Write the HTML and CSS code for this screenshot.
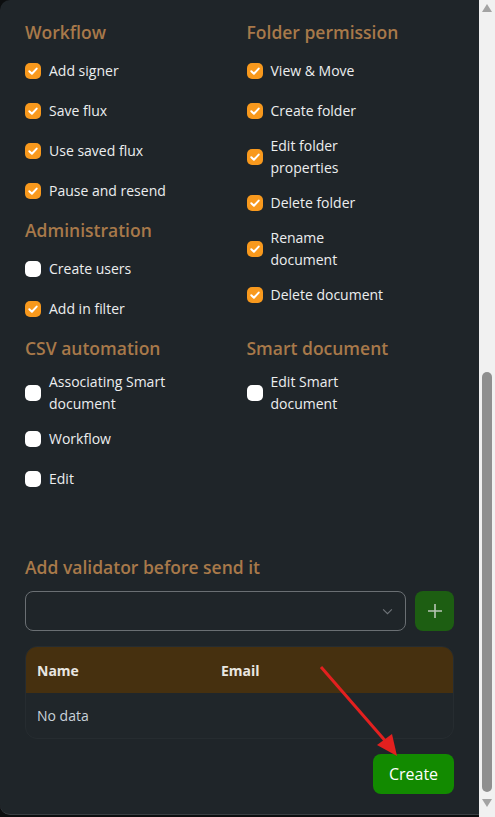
FILE: index.html
```html
<!DOCTYPE html>
<html lang="en">
<head>
<meta charset="utf-8">
<title>Permissions</title>
<link rel="stylesheet" href="styles.css">
</head>
<body>
<div class="window">
  <main class="panel">
    <div class="perm-grid">
      <div class="col">
        <section class="section">
          <h2 class="title">Workflow</h2>
          <label class="check"><span class="box on"><svg viewBox="0 0 16 16"><path d="M4.3 8.3 L6.9 10.8 L11.7 5.6"/></svg></span><span class="label">Add signer</span></label>
          <label class="check"><span class="box on"><svg viewBox="0 0 16 16"><path d="M4.3 8.3 L6.9 10.8 L11.7 5.6"/></svg></span><span class="label">Save flux</span></label>
          <label class="check"><span class="box on"><svg viewBox="0 0 16 16"><path d="M4.3 8.3 L6.9 10.8 L11.7 5.6"/></svg></span><span class="label">Use saved flux</span></label>
          <label class="check"><span class="box on"><svg viewBox="0 0 16 16"><path d="M4.3 8.3 L6.9 10.8 L11.7 5.6"/></svg></span><span class="label">Pause and resend</span></label>
        </section>
        <section class="section">
          <h2 class="title">Administration</h2>
          <label class="check"><span class="box"></span><span class="label">Create users</span></label>
          <label class="check"><span class="box on"><svg viewBox="0 0 16 16"><path d="M4.3 8.3 L6.9 10.8 L11.7 5.6"/></svg></span><span class="label">Add in filter</span></label>
        </section>
      </div>
      <div class="col">
        <section class="section">
          <h2 class="title">Folder permission</h2>
          <label class="check"><span class="box on"><svg viewBox="0 0 16 16"><path d="M4.3 8.3 L6.9 10.8 L11.7 5.6"/></svg></span><span class="label">View &amp; Move</span></label>
          <label class="check"><span class="box on"><svg viewBox="0 0 16 16"><path d="M4.3 8.3 L6.9 10.8 L11.7 5.6"/></svg></span><span class="label">Create folder</span></label>
          <label class="check"><span class="box on"><svg viewBox="0 0 16 16"><path d="M4.3 8.3 L6.9 10.8 L11.7 5.6"/></svg></span><span class="label">Edit folder properties</span></label>
          <label class="check"><span class="box on"><svg viewBox="0 0 16 16"><path d="M4.3 8.3 L6.9 10.8 L11.7 5.6"/></svg></span><span class="label">Delete folder</span></label>
          <label class="check"><span class="box on"><svg viewBox="0 0 16 16"><path d="M4.3 8.3 L6.9 10.8 L11.7 5.6"/></svg></span><span class="label">Rename document</span></label>
          <label class="check"><span class="box on"><svg viewBox="0 0 16 16"><path d="M4.3 8.3 L6.9 10.8 L11.7 5.6"/></svg></span><span class="label">Delete document</span></label>
        </section>
      </div>
      <div class="col">
        <section class="section">
          <h2 class="title">CSV automation</h2>
          <label class="check"><span class="box"></span><span class="label">Associating Smart document</span></label>
          <label class="check"><span class="box"></span><span class="label">Workflow</span></label>
          <label class="check"><span class="box"></span><span class="label">Edit</span></label>
        </section>
      </div>
      <div class="col">
        <section class="section">
          <h2 class="title">Smart document</h2>
          <label class="check"><span class="box"></span><span class="label">Edit Smart document</span></label>
        </section>
      </div>
    </div>

    <section class="validator">
      <h2 class="title">Add validator before send it</h2>
      <div class="select-row">
        <div class="select">
          <svg class="chev" viewBox="0 0 12 8"><path d="M1 1.5 L6 6.5 L11 1.5"/></svg>
        </div>
        <button class="add" type="button"><svg viewBox="0 0 16 16"><path d="M8 1 V15 M1 8 H15"/></svg></button>
      </div>
      <div class="table">
        <div class="thead">
          <div class="th">Name</div>
          <div class="th">Email</div>
        </div>
        <div class="tbody">No data</div>
      </div>
      <div class="actions">
        <button class="create" type="button">Create</button>
      </div>
    </section>

    <svg class="arrow" viewBox="0 0 479 815" width="479" height="815">
      <line x1="321" y1="667" x2="388" y2="744"/>
      <polygon points="397,756 377,745 392,734"/>
    </svg>
  </main>
  <div class="scrollbar">
    <span class="tri up"></span>
    <div class="track"><span class="thumb"></span></div>
    <span class="tri down"></span>
  </div>
</div>
</body>
</html>
```

FILE: styles.css
```css
* {
  box-sizing: border-box;
  margin: 0;
  padding: 0;
}

html, body {
  height: 817px;
  overflow: hidden;
}

body {
  background: #0c0e0f;
  font-family: "Open Sans", "Noto Sans", sans-serif;
}

.window {
  display: flex;
  height: 817px;
}

.panel {
  position: relative;
  width: 479px;
  height: 815px;
  flex: none;
  background: #1f2529;
  border-radius: 10px 0 0 10px;
  border-bottom: 1px solid #3a3f43;
  padding: 17px 25px 18px;
  display: flex;
  flex-direction: column;
}

.perm-grid {
  display: grid;
  grid-template-columns: 1fr 1fr;
  column-gap: 14px;
  row-gap: 8px;
}

.col,
.section {
  display: flex;
  flex-direction: column;
  gap: 8px;
}

.title {
  font-size: 17.5px;
  font-weight: 600;
  line-height: 30px;
  color: #a8794a;
}

.check {
  display: flex;
  align-items: center;
  gap: 8px;
  min-height: 32px;
}

.box {
  width: 16px;
  height: 16px;
  flex: none;
  border-radius: 5px;
  background: #ffffff;
  display: flex;
}

.box.on {
  background: #f8991d;
}

.box svg {
  width: 16px;
  height: 16px;
}

.box svg path {
  fill: none;
  stroke: #ffffff;
  stroke-width: 2;
  stroke-linecap: round;
  stroke-linejoin: round;
}

.label {
  font-size: 14px;
  line-height: 22px;
  color: #eceeef;
  max-width: 119px;
}

.validator {
  margin-top: 57px;
  display: flex;
  flex-direction: column;
}

.select-row {
  margin-top: 9px;
  display: flex;
  gap: 9px;
}

.select {
  flex: 1;
  height: 40px;
  border: 1px solid #6a6f73;
  border-radius: 8px;
  display: flex;
  align-items: center;
  justify-content: flex-end;
  padding-right: 12px;
}

.chev {
  width: 11px;
  height: 7px;
}

.chev path {
  fill: none;
  stroke: #70757a;
  stroke-width: 1.2;
}

.add {
  width: 39px;
  height: 40px;
  border: none;
  border-radius: 8px;
  background: #1d5e12;
  display: flex;
  align-items: center;
  justify-content: center;
}

.add svg {
  width: 16px;
  height: 16px;
}

.add svg path {
  stroke: #b9c6b6;
  stroke-width: 1.6;
}

.table {
  margin-top: 15px;
  border: 1px solid #262c30;
  border-radius: 12px;
  overflow: hidden;
  background: #20262a;
}

.thead {
  display: grid;
  grid-template-columns: 184px 1fr;
  height: 46px;
  align-items: center;
  background: #46300f;
}

.th {
  padding-left: 11px;
  font-size: 14px;
  font-weight: 700;
  color: #e9e6e1;
}

.tbody {
  height: 45px;
  display: flex;
  align-items: center;
  padding-left: 11px;
  font-size: 14px;
  color: #c9d2da;
}

.actions {
  margin-top: 15px;
  display: flex;
  justify-content: flex-end;
}

.create {
  width: 81px;
  height: 40px;
  border: none;
  border-radius: 8px;
  background: #128a00;
  color: #ffffff;
  font-family: "Open Sans", "Noto Sans", sans-serif;
  font-size: 16px;
}

.arrow {
  position: absolute;
  left: 0;
  top: 0;
  pointer-events: none;
}

.arrow line {
  stroke: #e3201f;
  stroke-width: 3;
}

.arrow polygon {
  fill: #e3201f;
}

.scrollbar {
  width: 16px;
  height: 817px;
  background: #f1f1f1;
  display: flex;
  flex-direction: column;
  align-items: center;
  padding: 4px 0 10px;
}

.tri {
  width: 0;
  height: 0;
  border-left: 5px solid transparent;
  border-right: 5px solid transparent;
  flex: none;
}

.tri.up {
  border-bottom: 8px solid #a3a3a3;
}

.tri.down {
  border-top: 8px solid #a3a3a3;
}

.track {
  flex: 1;
  width: 100%;
  display: flex;
  flex-direction: column;
  justify-content: flex-end;
  align-items: center;
  padding: 4px 0 7px;
}

.thumb {
  width: 10px;
  height: 420px;
  border-radius: 5px;
  background: #8f8f8f;
}
```
